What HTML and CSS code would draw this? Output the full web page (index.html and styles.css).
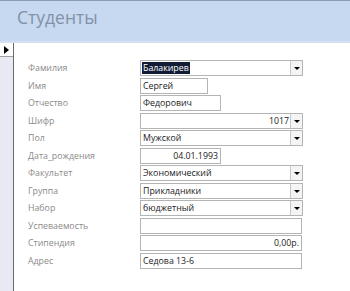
FILE: index.html
```html
<!DOCTYPE html>
<html lang="ru">
<head>
  <meta charset="UTF-8" />
  <title>Студенты</title>
  <link rel="stylesheet" href="styles.css">
</head>
<body>

<div class="header">
  <div class="title">Студенты</div>
</div>

<div class="main">
  <div class="selector">
    <div class="current">
      <svg width="5" height="8" viewBox="0 0 5 8"><path d="M0 0 L5 4 L0 8 Z" fill="#000"/></svg>
    </div>
  </div>

  <div class="form">
    <div class="label">Фамилия</div>
    <div class="field combo wide"><span class="selected">Балакирев</span><span class="drop"></span></div>

    <div class="label">Имя</div>
    <div class="field short">Сергей</div>

    <div class="label">Отчество</div>
    <div class="field mid">Федорович</div>

    <div class="label">Шифр</div>
    <div class="field combo wide right">1017<span class="drop"></span></div>

    <div class="label">Пол</div>
    <div class="field combo wide">Мужской<span class="drop"></span></div>

    <div class="label">Дата_рождения</div>
    <div class="field mid right">04.01.1993</div>

    <div class="label">Факультет</div>
    <div class="field combo wide">Экономический<span class="drop"></span></div>

    <div class="label">Группа</div>
    <div class="field combo wide">Прикладники<span class="drop"></span></div>

    <div class="label">Набор</div>
    <div class="field combo wide">бюджетный<span class="drop"></span></div>

    <div class="label">Успеваемость</div>
    <div class="field full"></div>

    <div class="label">Стипендия</div>
    <div class="field full right">0,00р.</div>

    <div class="label">Адрес</div>
    <div class="field full">Седова 13-6</div>
  </div>
</div>

</body>
</html>
```

FILE: styles.css
```css
* {
  box-sizing: border-box;
}

html, body {
  margin: 0;
  padding: 0;
  width: 350px;
  height: 291px;
  overflow: hidden;
  background: white;
  font-family: 'Open Sans', 'DejaVu Sans', sans-serif;
}

.header {
  height: 43px;
  background: #c6d9f0;
  border-top: 1px solid #8d9bb0;
  border-bottom: 2px solid #d3e0f4;
  padding: 4px 0 0 17px;
}

.title {
  font-size: 17.5px;
  color: #8391a6;
}

.main {
  display: flex;
  height: 248px;
}

.selector {
  width: 14px;
  background: #e8e9f2;
  border-right: 1px solid #6b6b6b;
}

.current {
  height: 14px;
  background: white;
  border-bottom: 1px solid #a0a0a0;
  display: flex;
  align-items: center;
  padding-left: 4px;
}

.form {
  display: grid;
  grid-template-columns: 112px 163px;
  grid-auto-rows: 16px;
  row-gap: 1.55px;
  padding: 17px 0 0 14px;
  align-items: center;
}

.label {
  font-size: 8.8px;
  color: #8a8a8a;
}

.field {
  height: 16px;
  border: 1px solid #b4b4b4;
  font-size: 8.8px;
  color: #222;
  padding: 0 2px;
  display: flex;
  align-items: center;
  white-space: nowrap;
  background: white;
}

.short { width: 68px; }
.mid { width: 81px; }
.full { width: 162px; }
.wide { width: 163px; }

.right {
  justify-content: flex-end;
}

.combo {
  padding-right: 0;
}

.combo .drop {
  margin-left: auto;
  width: 12px;
  height: 14px;
  border-left: 1px solid #c8c8c8;
  background: #f4f4f4;
  position: relative;
  flex: none;
}

.combo.right .drop {
  margin-left: 1px;
}

.combo .drop::after {
  content: '';
  position: absolute;
  left: 3px;
  top: 6px;
  border-left: 3px solid transparent;
  border-right: 3px solid transparent;
  border-top: 3px solid #000;
}

.selected {
  background: #101c36;
  color: white;
  padding: 0 1px;
  margin-left: -1px;
}
```
